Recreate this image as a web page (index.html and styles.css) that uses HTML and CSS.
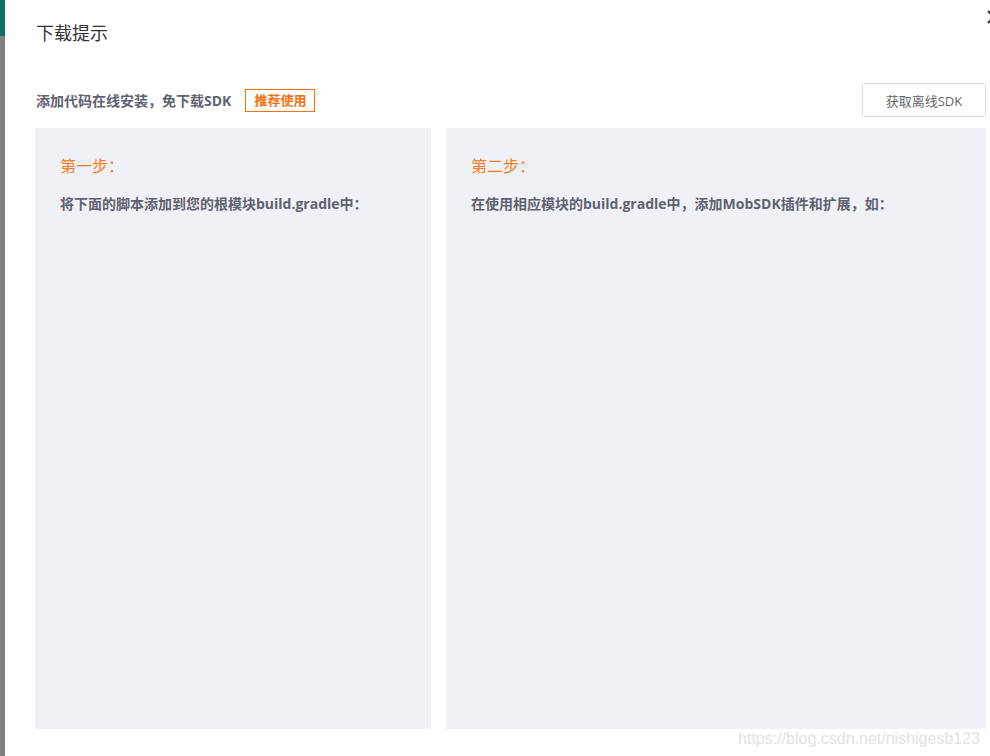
FILE: index.html
```html
<!DOCTYPE html>
<html lang="zh-CN">
<head>
    <meta charset="UTF-8">
    <meta name="viewport" content="width=device-width, initial-scale=1.0">
    <title>下载提示</title>
    <link rel="stylesheet" href="styles.css">
</head>
<body>

    <div class="page">
        <!-- 背后的页面 -->
        <div class="backdrop">
            <div class="backdrop-top"></div>
        </div>

        <!-- 弹窗 -->
        <div class="modal">
            <svg class="close" width="14" height="14" viewBox="0 0 14 14">
                <path d="M1 1 L13 13 M13 1 L1 13" stroke="#333" stroke-width="2" fill="none"/>
            </svg>
            <h2 class="modal-title">下载提示</h2>

            <div class="toolbar">
                <div class="toolbar-left">
                    <span class="tip">添加代码在线安装，免下载SDK</span>
                    <span class="badge">推荐使用</span>
                </div>
                <button class="btn">获取离线SDK</button>
            </div>

            <div class="steps">
                <div class="step step-one">
                    <h3>第一步：</h3>
                    <p>将下面的脚本添加到您的根模块build.gradle中：</p>
                </div>
                <div class="step step-two">
                    <h3>第二步：</h3>
                    <p>在使用相应模块的build.gradle中，添加MobSDK插件和扩展，如：</p>
                </div>
            </div>

            <div class="watermark">https://blog.csdn.net/nishigesb123</div>
        </div>
    </div>

</body>
</html>
```

FILE: styles.css
```css
body {
    margin: 0;
    padding: 0;
    font-family: "Open Sans", "Noto Sans CJK SC", sans-serif;
    color: #333;
    background: #fff;
    overflow: hidden;
}
.page {
    display: flex;
    height: 756px;
}
.backdrop {
    width: 5px;
    background: #7f7f7f;
}
.backdrop-top {
    height: 36px;
    background: #0e6f66;
}
.modal {
    position: relative;
    flex: 1;
    background: #fff;
    padding: 21px 4px 0 30px;
}
.close {
    position: absolute;
    top: 10px;
    right: -11px;
}
.modal-title {
    margin: 0 0 0 1px;
    font-size: 18px;
    font-weight: normal;
    line-height: 24px;
    color: #333;
}
.toolbar {
    display: flex;
    justify-content: space-between;
    align-items: center;
    margin-top: 38px;
}
.toolbar-left {
    display: flex;
    align-items: center;
}
.tip {
    margin-left: 1px;
    font-size: 14px;
    font-weight: bold;
    color: #5f6270;
}
.badge {
    margin-left: 14px;
    padding: 0 8px;
    height: 21px;
    line-height: 21px;
    border: 1px solid #fb6f0f;
    font-size: 13px;
    font-weight: bold;
    color: #fb6f0f;
}
.btn {
    width: 124px;
    height: 34px;
    padding: 0;
    font-family: "Open Sans", "Noto Sans CJK SC", sans-serif;
    font-size: 13px;
    color: #666;
    background: #fff;
    border: 1px solid #dcdde3;
    border-radius: 3px;
}
.steps {
    display: flex;
    gap: 15px;
    margin-top: 11px;
}
.step {
    height: 601px;
    box-sizing: border-box;
    padding: 26px 25px;
    background: #f0f1f6;
}
.step-one {
    width: 396px;
}
.step-two {
    flex: 1;
}
.step h3 {
    margin: 0;
    font-size: 16px;
    font-weight: normal;
    line-height: 24px;
    color: #fb7b1f;
}
.step p {
    margin: 14px 0 0;
    font-size: 14px;
    font-weight: bold;
    line-height: 24px;
    color: #5f6270;
}
.watermark {
    position: absolute;
    right: 10px;
    bottom: 8px;
    font-family: "Liberation Sans", sans-serif;
    font-size: 16px;
    color: #e2e2e6;
}
```
